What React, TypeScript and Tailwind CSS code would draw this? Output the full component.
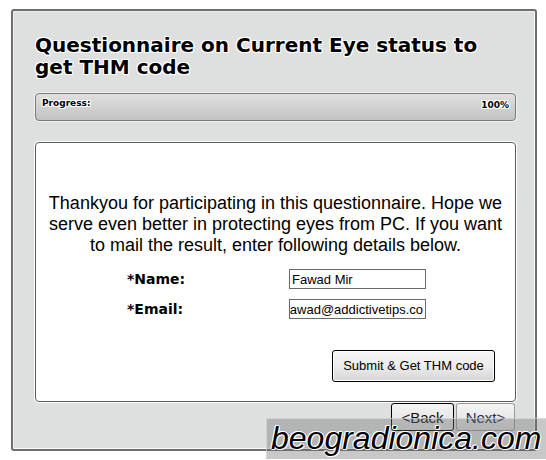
import React from "react";

const glow =
  "[text-shadow:1px_0_0_#fff,-1px_0_0_#fff,0_1px_0_#fff,0_-1px_0_#fff,1px_1px_0_#fff,-1px_-1px_0_#fff,1px_-1px_0_#fff,-1px_1px_0_#fff]";

function Field({
  label,
  value,
  scrolled,
}: {
  label: string;
  value: string;
  scrolled?: boolean;
}) {
  return (
    <div className="flex items-center h-[20px]">
      <span
        className={`w-[162px] font-['DejaVu_Sans',sans-serif] font-bold text-[14px] text-black ${glow}`}
      >
        {label}
      </span>
      <div
        className={`w-[137px] h-[20px] border border-[#6b6b6b] bg-white overflow-hidden flex items-center px-[2px] ${
          scrolled ? "justify-end" : "justify-start"
        }`}
      >
        <span className="shrink-0 whitespace-nowrap font-['Liberation_Sans',sans-serif] text-[13px] text-black leading-none">
          {value}
        </span>
      </div>
    </div>
  );
}

export default function App() {
  return (
    <div className="relative w-[546px] h-[460px] bg-white overflow-hidden">
      <div className="ml-[11px] mt-[9px] w-[526px] h-[442px] rounded-[3px] border-2 border-[#6e6e6e] bg-[#dde0df] shadow-[inset_1px_1px_0_#eef0ef,inset_-1px_-1px_0_#fafafa] pl-[22px] pr-[19px] pt-[23px]">
        <h1
          className={`font-['DejaVu_Sans',sans-serif] font-bold text-[20px] leading-[22px] text-black ${glow}`}
        >
          Questionnaire on Current Eye status to
          <br />
          get THM code
        </h1>

        <div className="mt-[15px] h-[28px] rounded-[4px] border border-[#7a7a7a] shadow-[0_0_0_1px_#f2f2f2] bg-gradient-to-b from-[#e0e0e0] to-[#c2c2c2] flex justify-between px-[6px] pt-[3px]">
          <span
            className={`font-['DejaVu_Sans',sans-serif] font-bold text-[9px] leading-[12px] text-black ${glow}`}
          >
            Progress:
          </span>
          <span
            className={`font-['DejaVu_Sans',sans-serif] font-bold text-[9px] leading-[16px] text-black ${glow}`}
          >
            100%
          </span>
        </div>

        <div className="mt-[21px] h-[260px] rounded-[4px] border border-[#5a5a5a] bg-white shadow-[0_0_0_1px_#ffffff] flex flex-col">
          <p className="mt-[50px] px-[8px] text-center font-['Liberation_Sans',sans-serif] text-[18px] leading-[21px] text-black">
            Thankyou for participating in this questionnaire. Hope we serve
            even better in protecting eyes from PC. If you want to mail the
            result, enter following details below.
          </p>

          <div className="mt-[13px] pl-[91px] flex flex-col gap-[10px]">
            <Field label="*Name:" value="Fawad Mir" />
            <Field label="*Email:" value="fawad@addictivetips.co" scrolled />
          </div>

          <div className="mt-[31px] flex justify-end pr-[20px]">
            <button className="w-[163px] h-[32px] rounded-[3px] border border-black bg-gradient-to-b from-[#f6f6f6] via-[#ececec] to-[#d6d6d6] shadow-[inset_0_0_0_1px_#ffffff] font-['Liberation_Sans',sans-serif] text-[13px] text-black">
              Submit &amp; Get THM code
            </button>
          </div>
        </div>

        <div className="flex justify-end gap-[2px] mt-[1px] pr-[1px]">
          <button className="w-[63px] h-[28px] rounded-[3px] border border-black bg-gradient-to-b from-[#f4f4f4] to-[#dedede] font-['Liberation_Sans',sans-serif] text-[15px] leading-none text-[#111]">
            &lt;Back
          </button>
          <button className="w-[59px] h-[28px] rounded-[3px] border border-[#9a9a9a] bg-gradient-to-b from-[#f4f4f4] to-[#dedede] font-['Liberation_Sans',sans-serif] text-[15px] leading-none text-[#2d2d4a]">
            Next&gt;
          </button>
        </div>
      </div>

      <div className="absolute left-[266px] top-[418px] w-[280px] h-[41px] bg-[rgba(110,110,110,0.38)] border-t border-l border-[rgba(230,230,230,0.6)] border-b-2 border-b-[rgba(200,200,200,0.8)] flex items-center pl-[4px]">
        <span className="font-['Liberation_Sans',sans-serif] italic text-[32px] leading-none text-black [text-shadow:1px_0_0_#fff,-1px_0_0_#fff,0_1px_0_#fff,0_-1px_0_#fff,1px_1px_0_#fff,-1px_-1px_0_#fff]">
          beogradionica.com
        </span>
      </div>
    </div>
  );
}
